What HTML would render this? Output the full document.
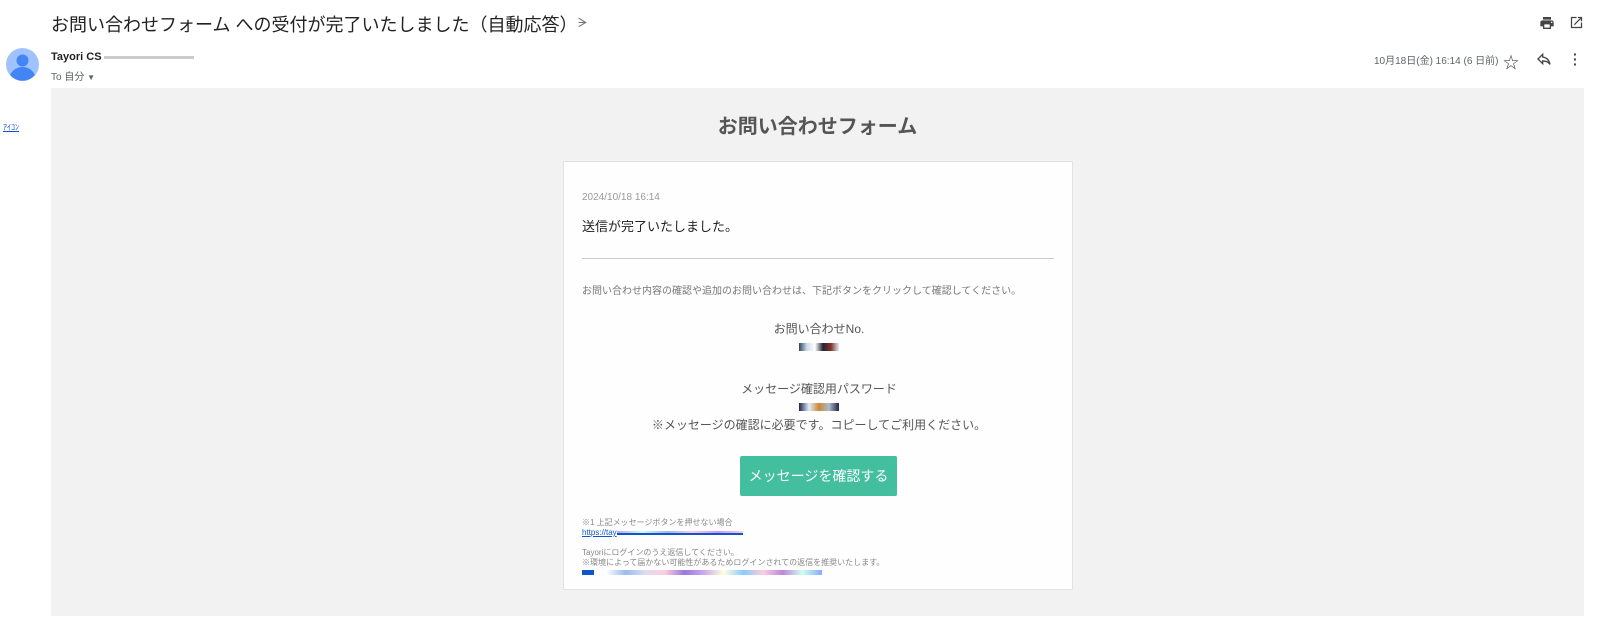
<!DOCTYPE html>
<html><head><meta charset="utf-8"><style>
*{margin:0;padding:0;box-sizing:border-box}
body{width:1604px;height:624px;background:#fff;font-family:"Liberation Sans","Noto Sans CJK JP",sans-serif;position:relative;overflow:hidden;color:#222}
.a{position:absolute;white-space:nowrap}
.gray{position:absolute;left:51px;top:88px;width:1533px;height:528px;background:#f2f2f2}
.card{position:absolute;left:563px;top:161px;width:510px;height:429px;background:#fefefe;border:1px solid #e3e3e3}
.c{text-align:center;width:510px;left:0}
.blur{display:inline-block;height:8px}
</style></head><body>
<div class="a" style="left:51px;top:11px;font-size:18px;color:#222">お問い合わせフォーム への受付が完了いたしました（自動応答）</div>
<div class="a" style="left:578px;top:15px;font-size:13px;color:#777">ᗒ</div>
<svg class="a" style="left:1539px;top:15px" width="16" height="16" viewBox="0 0 24 24"><path d="M19 8H5c-1.7 0-3 1.3-3 3v6h4v4h12v-4h4v-6c0-1.7-1.3-3-3-3zm-3 11H8v-5h8v5zm3-7c-.6 0-1-.4-1-1s.4-1 1-1 1 .4 1 1-.4 1-1 1zm-1-9H6v4h12V3z" fill="#444"/></svg>
<svg class="a" style="left:1569px;top:15px" width="15" height="15" viewBox="0 0 24 24"><path d="M19 19H5V5h7V3H3v18h18v-9h-2v7zM14 3v2h3.6l-9.8 9.8 1.4 1.4L19 6.4V10h2V3h-7z" fill="#444"/></svg>
<svg class="a" style="left:6px;top:48px" width="33" height="33" viewBox="0 0 33 33"><circle cx="16.5" cy="16.5" r="16.5" fill="#a0c3ff"/><circle cx="16.5" cy="12.5" r="6" fill="#4285f4"/><path d="M4 27c3-6 8-8 12.5-8s9.5 2 12.5 8a16.5 16.5 0 0 1-25 0z" fill="#4285f4"/></svg>
<div class="a" style="left:51px;top:51px;font-size:11px;font-weight:bold;color:#222">Tayori CS<span style="display:inline-block;width:90px;height:3px;background:#ccc;vertical-align:middle;margin-left:2px"></span></div>
<div class="a" style="left:51px;top:68px;font-size:10px;color:#5f6368">To 自分 <span style="font-size:8px">▼</span></div>
<div class="a" style="left:1374px;top:52px;font-size:10px;color:#5f6368">10月18日(金) 16:14 (6 日前)</div>
<div class="a" style="left:1503px;top:49px;font-size:16px;color:#444">☆</div>
<svg class="a" style="left:1536px;top:51px" width="16" height="16" viewBox="0 0 24 24"><path d="M10 9V5l-7 7 7 7v-4.1c5 0 8.5 1.6 11 5.1-1-5-4-10-11-11z" fill="none" stroke="#444" stroke-width="2"/></svg>
<div class="a" style="left:1573px;top:52px;font-size:14px;font-weight:bold;color:#444;line-height:5px">·<br>·<br>·</div>
<div class="a" style="left:3px;top:122px;font-size:8px;color:#15c;text-decoration:underline">ｱｲｺﾝ</div>
<div class="gray"></div>
<div class="a" style="left:51px;width:1533px;text-align:center;top:110px;font-size:20px;font-weight:bold;color:#555">お問い合わせフォーム</div>
<div class="card">
<div class="a" style="left:18px;top:30px;font-size:10px;color:#999">2024/10/18 16:14</div>
<div class="a" style="left:18px;top:54px;font-size:13px;color:#222">送信が完了いたしました。</div>
<div class="a" style="left:18px;top:96px;width:472px;height:1px;background:#ccc"></div>
<div class="a" style="left:18px;top:120px;font-size:10px;color:#777">お問い合わせ内容の確認や追加のお問い合わせは、下記ボタンをクリックして確認してください。</div>
<div class="a c" style="top:158px;font-size:12px;color:#555">お問い合わせNo.</div>
<div class="a c" style="top:176px"><span class="blur" style="width:40px;background:linear-gradient(90deg,#345,#cde,#fff,#223,#832,#def)"></span></div>
<div class="a c" style="top:218px;font-size:12px;color:#555">メッセージ確認用パスワード</div>
<div class="a c" style="top:236px"><span class="blur" style="width:40px;background:linear-gradient(90deg,#224,#def,#c83,#abc,#224)"></span></div>
<div class="a c" style="top:254px;font-size:12px;color:#555">※メッセージの確認に必要です。コピーしてご利用ください。</div>
<div class="a" style="left:176px;top:294px;width:157px;height:40px;background:#43bf9f;border-radius:2px;color:#fff;font-size:14px;text-align:center;line-height:40px">メッセージを確認する</div>
<div class="a" style="left:18px;top:356px;font-size:8px;color:#888;line-height:10px">※1 上記メッセージボタンを押せない場合<br><span style="color:#15c;text-decoration:underline">https://tay</span><span style="display:inline-block;width:126px;height:4px;background:linear-gradient(90deg,#bae,#cfe,#9be,#fcd,#c9e,#fcd);border-bottom:2px solid #15c"></span><br><br>Tayoriにログインのうえ返信してください。<br>※環境によって届かない可能性があるためログインされての返信を推奨いたします。<br><span style="display:inline-block;width:240px;height:5px;background:linear-gradient(90deg,#15c 5%,#fff 5%,#fff 10%,#9be,#dde,#fcd,#97d,#cae,#ffd,#8cf,#fcd,#b8d,#cfe,#8af)"></span></div>
</div>
</body></html>
